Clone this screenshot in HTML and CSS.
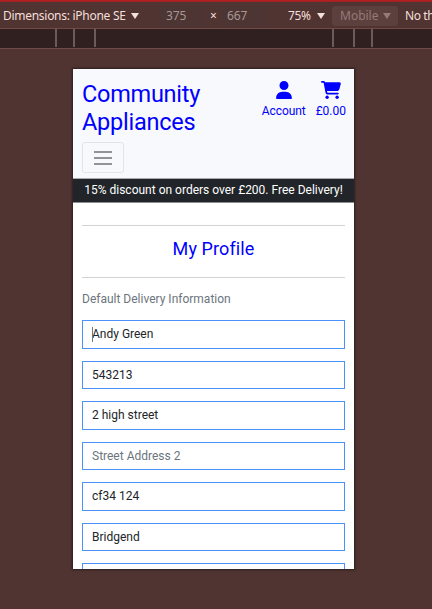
FILE: index.html
```html
<!DOCTYPE html>
<html lang="en">
<head>
<meta charset="utf-8">
<title>Community Appliances</title>
<link rel="stylesheet" href="styles.css">
</head>
<body>
<header class="toolbar">
  <span class="device">Dimensions: iPhone SE</span><i class="caret"></i>
  <span class="size width">375</span><span class="times">×</span><span class="size height">667</span>
  <span class="zoom">75%</span><i class="caret"></i>
  <span class="mobile"><span>Mobile</span><i class="caret"></i></span>
  <span class="throttle">No th</span>
</header>
<div class="ruler"><i></i><i></i><i></i><i></i><i></i><i></i></div>
<main class="phone">
  <section class="masthead">
    <h1>Community<br>Appliances</h1>
    <nav class="links">
      <a class="account"><svg width="16" height="18" viewBox="0 0 448 512"><path d="M224 256a128 128 0 1 0 0-256 128 128 0 0 0 0 256zm-46 48C80 304 0 384 0 482c0 17 13 30 30 30h388c17 0 30-13 30-30 0-98-80-178-178-178z"/></svg><span>Account</span></a>
      <a class="cart"><svg width="20" height="18" viewBox="0 0 576 512"><path d="M0 24C0 11 11 0 24 0h46c22 0 41 13 50 32h411c26 0 45 25 38 50l-41 152c-8 32-37 54-70 54H171l5 29c2 11 12 19 24 19h288c13 0 24 11 24 24s-11 24-24 24H200c-35 0-65-25-71-59L77 54c-1-3-4-6-7-6H24C11 48 0 37 0 24z"/><circle cx="176" cy="464" r="48"/><circle cx="464" cy="464" r="48"/></svg><span>£0.00</span></a>
    </nav>
    <button class="menu" aria-label="Menu"><svg width="18" height="14" viewBox="0 0 18 14"><path d="M0 1h18M0 7h18M0 13h18"/></svg></button>
  </section>
  <div class="banner">15% discount on orders over £200. Free Delivery!</div>
  <section class="profile">
    <h2>My Profile</h2>
    <p>Default Delivery Information</p>
    <form>
      <div class="field focused">Andy Green</div>
      <div class="field">543213</div>
      <div class="field">2 high street</div>
      <div class="field placeholder">Street Address 2</div>
      <div class="field">cf34 124</div>
      <div class="field">Bridgend</div>
      <div class="field"></div>
    </form>
  </section>
</main>
</body>
</html>
```
FILE: styles.css
```css
* { box-sizing: border-box; }
body { margin: 0; height: 609px; overflow: hidden; background: #503431; font: 12px/18px Roboto, "Liberation Sans", sans-serif; }
.toolbar { height: 29px; border-top: 1px solid #b51d20; border-bottom: 1px solid #704a48; box-shadow: inset 0 1px #9b2424; display: flex; align-items: center; padding: 2px 0 0 3px; font: 12px/18px "Noto Sans", sans-serif; color: #f3dfdc; white-space: nowrap; overflow: hidden; }
.toolbar > * { flex: none; }
.caret { border: 4px solid transparent; border-top: 6px solid currentColor; border-bottom: 0; }
.device { width: 128px; letter-spacing: -.28px; }
.size { color: #a99695; height: 20px; line-height: 20px; background: #4c3533; letter-spacing: -.1px; }
.width { margin-left: 21px; width: 45px; padding-left: 6px; }
.times { width: 12px; margin-left: 5px; }
.height { width: 44px; padding-left: 5px; margin-right: 22px; }
.zoom { width: 26px; letter-spacing: -.4px; margin-right: 3px; }
.mobile { width: 66px; height: 20px; margin-left: 7px; padding: 0 7px 0 8px; display: flex; align-items: center; justify-content: space-between; background: #5c403e; border-radius: 4px; color: #947a78; }
.throttle { margin-left: 7px; letter-spacing: -.4px; }
.ruler { height: 20px; display: flex; background: #302120; border-bottom: 1px solid #704a48; padding-left: 55px; }
.ruler i { width: 2px; height: 18px; background: #6d5b59; margin-right: 16px; }
.ruler i:nth-child(2) { margin-right: 19px; }
.ruler i:nth-child(3) { margin-right: 236px; }
.ruler i:nth-child(4) { margin-right: 19px; }
.phone { width: 281px; height: 500px; margin: 20px 0 0 73px; background: #fff; overflow: hidden; box-shadow: 0 0 2px 1px #2b2020; }
.masthead { height: 110px; display: grid; grid-template-columns: 1fr auto; grid-template-rows: 63px 31px; row-gap: 2px; padding: 8px 8px 0 9px; background: #f8f9fc; border-bottom: 1px solid #a7a9ac; }
h1 { margin: 3px 0 0; font: 400 23.5px/28px Roboto, sans-serif; letter-spacing: -.25px; color: #00f; white-space: nowrap; }
.links { display: flex; gap: 10px; padding-top: 4px; color: #00f; }
.links a { display: flex; flex-direction: column; align-items: center; }
.links svg { fill: currentColor; margin-bottom: 3px; }
.account { letter-spacing: -.08px; }
.menu { width: 42px; height: 31px; border: 1px solid #e2e4e7; border-radius: 3px; background: transparent; padding: 0; display: flex; align-items: center; justify-content: center; }
.menu svg { fill: none; stroke: #6f7274; stroke-width: 1.5; stroke-linecap: round; }
.banner { height: 24px; background: #212529; color: #fff; text-align: center; line-height: 22px; border-bottom: 1px solid #8b8d90; white-space: nowrap; }
.profile { padding: 22px 9px 0; }
h2 { margin: 0; height: 53px; border: solid #d3d3d3; border-width: 1px 0; color: #00f; text-align: center; font: 400 18px/45px Roboto, sans-serif; letter-spacing: .1px; }
p { margin: 12px 0 12px; color: #6c757d; }
.field { height: 28.5px; margin-bottom: 12px; padding-left: 9px; border: 1px solid #4b91fa; color: #212529; line-height: 27px; }
.placeholder { color: #6c757d; }
.focused { position: relative; }
.focused::before { content: ""; position: absolute; left: 9px; top: 6px; width: 1px; height: 15px; background: #777; }
```
